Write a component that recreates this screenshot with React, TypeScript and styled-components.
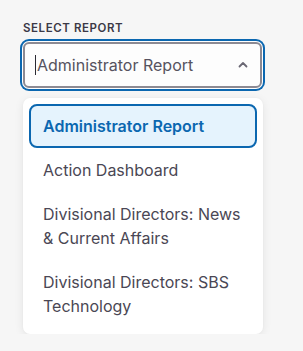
import React from 'react';
import styled, { createGlobalStyle } from 'styled-components';

const GlobalStyle = createGlobalStyle`
  html, body {
    margin: 0;
    background: #f6f6f6;
    font-family: Inter, "Noto Sans", sans-serif;
  }
`;

const Page = styled.div`
  padding: 21px 0 0 23px;
  width: 240px;
`;

const Label = styled.div`
  font-size: 11.5px;
  line-height: 14px;
  font-weight: 600;
  letter-spacing: 0.05em;
  color: #3b3946;
  margin-bottom: 7px;
`;

const SelectBox = styled.div`
  display: flex;
  align-items: center;
  height: 46px;
  box-sizing: border-box;
  width: 239px;
  padding: 0 11px 0 10px;
  background: #fdfdfd;
  border: 2px solid #8c8a93;
  border-radius: 6px;
  box-shadow: 0 0 0 1px #ffffff, 0 0 0 3px #0b67b0;
`;

const Caret = styled.span`
  width: 1px;
  height: 20px;
  background: #2a2a33;
  margin-right: 1px;
`;

const Value = styled.span`
  flex: 1;
  font-size: 16px;
  color: #56535f;
`;

const Chevron = styled.svg`
  width: 12px;
  height: 12px;
  color: #6a6874;
`;

const Menu = styled.ul`
  list-style: none;
  margin: 10px 0 0;
  padding: 6px;
  width: 240px;
  box-sizing: border-box;
  background: #ffffff;
  border-radius: 7px;
  box-shadow: 0 2px 10px rgba(0, 0, 0, 0.08), 0 0 2px rgba(0, 0, 0, 0.04);
`;

const Option = styled.li<{ $active?: boolean }>`
  padding: 8px 12px;
  border: 2px solid ${(p) => (p.$active ? '#0b67b0' : 'transparent')};
  border-radius: 8px;
  background: ${(p) => (p.$active ? '#e5f3fd' : 'transparent')};
  color: ${(p) => (p.$active ? '#0b67b0' : '#4a4754')};
  font-weight: ${(p) => (p.$active ? 600 : 400)};
  font-size: 16px;
  line-height: 24px;
`;

const options = [
  'Administrator Report',
  'Action Dashboard',
  'Divisional Directors: News & Current Affairs',
  'Divisional Directors: SBS Technology',
];

export default function App() {
  return (
    <Page>
      <GlobalStyle />
      <Label>SELECT REPORT</Label>
      <SelectBox>
        <Caret />
        <Value>Administrator Report</Value>
        <Chevron viewBox="0 0 12 12" fill="none">
          <path d="M2.5 7.5 6 4l3.5 3.5" stroke="currentColor" strokeWidth="1.8" strokeLinecap="round" strokeLinejoin="round" />
        </Chevron>
      </SelectBox>
      <Menu>
        {options.map((o, i) => (
          <Option key={o} $active={i === 0}>
            {o}
          </Option>
        ))}
      </Menu>
    </Page>
  );
}
